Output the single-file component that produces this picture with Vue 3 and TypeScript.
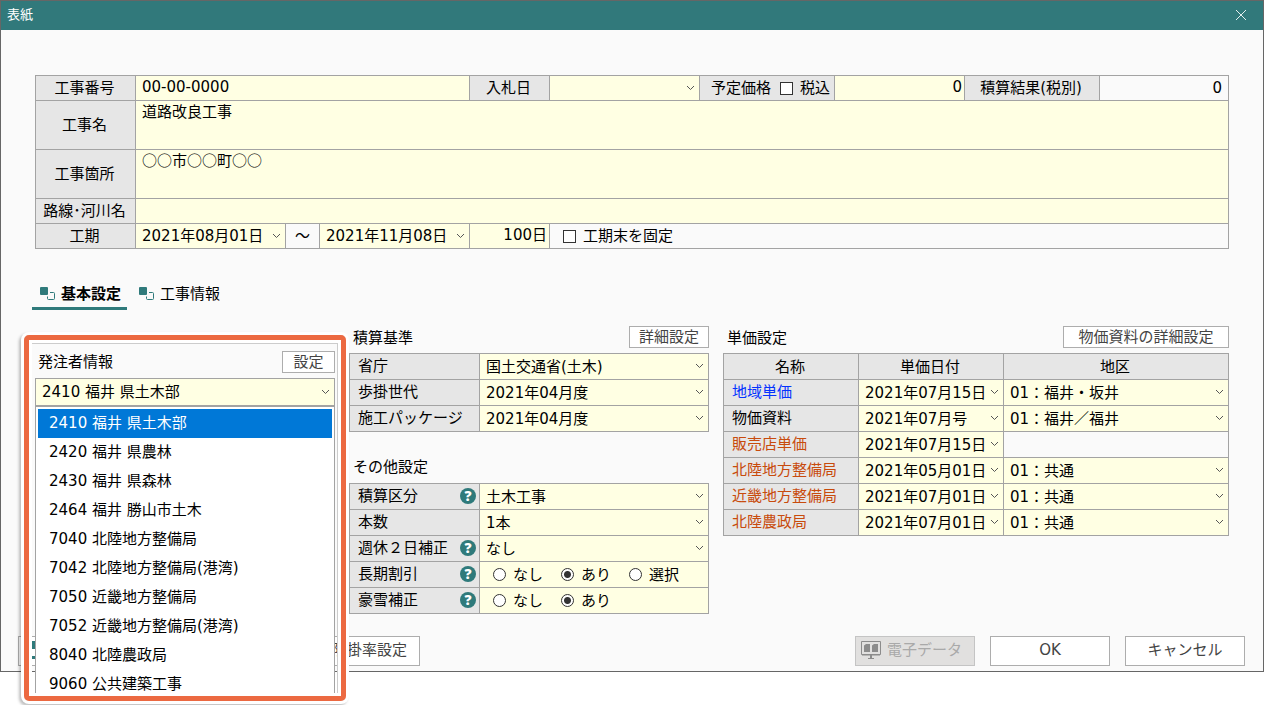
<script setup lang="ts">
import { ref } from 'vue'

interface PriceRow {
  name: string
  tone: 'blue' | 'black' | 'orange'
  date: string
  area: string | null
}

const clients: string[] = [
  '2410 福井 県土木部',
  '2420 福井 県農林',
  '2430 福井 県森林',
  '2464 福井 勝山市土木',
  '7040 北陸地方整備局',
  '7042 北陸地方整備局(港湾)',
  '7050 近畿地方整備局',
  '7052 近畿地方整備局(港湾)',
  '8040 北陸農政局',
  '9060 公共建築工事',
]
const client = ref(clients[0])

const standards = [
  { id: 'ministry', label: '省庁', value: '国土交通省(土木)' },
  { id: 'rate', label: '歩掛世代', value: '2021年04月度' },
  { id: 'package', label: '施工パッケージ', value: '2021年04月度' },
]

const others = [
  { id: 'division', label: '積算区分', value: '土木工事', help: true },
  { id: 'count', label: '本数', value: '1本', help: false },
  { id: 'holiday', label: '週休２日補正', value: 'なし', help: true },
]

const choices = ref([
  { id: 'long', label: '長期割引', options: ['なし', 'あり', '選択'], value: 'あり' },
  { id: 'snow', label: '豪雪補正', options: ['なし', 'あり'], value: 'あり' },
])

const prices: PriceRow[] = [
  { name: '地域単価', tone: 'blue', date: '2021年07月15日', area: '01：福井・坂井' },
  { name: '物価資料', tone: 'black', date: '2021年07月号', area: '01：福井／福井' },
  { name: '販売店単価', tone: 'orange', date: '2021年07月15日', area: null },
  { name: '北陸地方整備局', tone: 'orange', date: '2021年05月01日', area: '01：共通' },
  { name: '近畿地方整備局', tone: 'orange', date: '2021年07月01日', area: '01：共通' },
  { name: '北陸農政局', tone: 'orange', date: '2021年07月01日', area: '01：共通' },
]
</script>

<template>
  <div class="desktop">
    <main class="window">
      <header class="titlebar">
        <h1>表紙</h1>
        <button class="close" type="button" aria-label="閉じる">
          <svg width="12" height="12" viewBox="0 0 12 12"><path d="M1 1l10 10M11 1L1 11" /></svg>
        </button>
      </header>

      <section class="sheet">
        <div class="row">
          <label class="head" for="number">工事番号</label>
          <div class="cell fill"><input id="number" type="text" value="00-00-0000" /></div>
          <label class="cell tag w80" for="bid">入札日</label>
          <div class="cell w150 combo">
            <select id="bid"><option></option></select>
            <svg class="chev" viewBox="0 0 9 6"><path d="M1 1l3.5 3.5L8 1" /></svg>
          </div>
          <div class="cell tag w135">
            <label for="planned">予定価格</label>
            <label class="check"><input type="checkbox" />税込</label>
          </div>
          <div class="cell w130"><input id="planned" class="num" type="text" value="0" /></div>
          <div class="cell tag w135">積算結果(税別)</div>
          <output class="cell plain w129">0</output>
        </div>
        <div class="row tall">
          <label class="head" for="title">工事名</label>
          <div class="cell fill"><textarea id="title">道路改良工事</textarea></div>
        </div>
        <div class="row tall">
          <label class="head" for="place">工事箇所</label>
          <div class="cell fill"><textarea id="place">○○市○○町○○</textarea></div>
        </div>
        <div class="row">
          <label class="head" for="route">路線･河川名</label>
          <div class="cell fill"><input id="route" type="text" value="" /></div>
        </div>
        <div class="row">
          <label class="head" for="from">工期</label>
          <div class="cell w150 combo">
            <select id="from"><option>2021年08月01日</option></select>
            <svg class="chev" viewBox="0 0 9 6"><path d="M1 1l3.5 3.5L8 1" /></svg>
          </div>
          <div class="cell plain mid w34">～</div>
          <div class="cell w150 combo">
            <select id="to" aria-label="工期末"><option>2021年11月08日</option></select>
            <svg class="chev" viewBox="0 0 9 6"><path d="M1 1l3.5 3.5L8 1" /></svg>
          </div>
          <div class="cell w80"><input class="num" type="text" value="100日" aria-label="日数" /></div>
          <div class="cell plain fill">
            <label class="check"><input type="checkbox" />工期末を固定</label>
          </div>
        </div>
      </section>

      <nav class="tabs">
        <button v-for="(t, i) in ['基本設定', '工事情報']" :key="t" type="button" class="tab" :class="{ on: i === 0 }">
          <svg width="15" height="16" viewBox="0 0 15 16">
            <rect x="0" y="1" width="8" height="8" rx="1" fill="#2f7a7b" />
            <path
              d="M10 6.500h3.500a1 1 0 0 1 1 1v5a1 1 0 0 1-1 1h-5a1 1 0 0 1-1-1v-2"
              fill="none"
              stroke="#2f7a7b"
            />
          </svg>
          {{ t }}
        </button>
      </nav>

      <div class="columns">
        <section class="client">
          <div class="callout">
            <div class="panel">
              <div class="panel-top">
                <div class="bar">
                  <label for="client">発注者情報</label>
                  <button type="button" class="btn small w53">設定</button>
                </div>
                <div class="combo picker">
                  <select id="client" v-model="client">
                    <option v-for="c in clients" :key="c">{{ c }}</option>
                  </select>
                  <svg class="chev" viewBox="0 0 9 6"><path d="M1 1l3.5 3.5L8 1" /></svg>
                </div>
              </div>
              <div class="panel-body">
                <ul class="list" role="listbox" aria-label="発注者情報">
                  <li
                    v-for="c in clients"
                    :key="c"
                    role="option"
                    :aria-selected="c === client"
                    :class="{ on: c === client }"
                    @click="client = c"
                  >{{ c }}</li>
                </ul>
              </div>
            </div>
          </div>
        </section>

        <section class="middle">
          <div class="bar">
            <h2>積算基準</h2>
            <button type="button" class="btn small w80">詳細設定</button>
          </div>
          <div class="form">
            <div v-for="s in standards" :key="s.id" class="line">
              <label class="name" :for="s.id">{{ s.label }}</label>
              <div class="value combo">
                <select :id="s.id"><option>{{ s.value }}</option></select>
                <svg class="chev" viewBox="0 0 9 6"><path d="M1 1l3.5 3.5L8 1" /></svg>
              </div>
            </div>
          </div>
          <div class="bar second"><h2>その他設定</h2></div>
          <div class="form">
            <div v-for="s in others" :key="s.id" class="line">
              <div class="name">
                <label :for="s.id">{{ s.label }}</label>
                <button v-if="s.help" type="button" class="help">?</button>
              </div>
              <div class="value combo">
                <select :id="s.id"><option>{{ s.value }}</option></select>
                <svg class="chev" viewBox="0 0 9 6"><path d="M1 1l3.5 3.5L8 1" /></svg>
              </div>
            </div>
            <div v-for="c in choices" :key="c.id" class="line" role="radiogroup" :aria-label="c.label">
              <div class="name">
                <span>{{ c.label }}</span>
                <button type="button" class="help">?</button>
              </div>
              <div class="value radios">
                <label v-for="o in c.options" :key="o">
                  <input v-model="c.value" type="radio" :name="c.id" :value="o" />{{ o }}
                </label>
              </div>
            </div>
          </div>
        </section>

        <section class="prices">
          <div class="bar">
            <h2>単価設定</h2>
            <button type="button" class="btn small w166">物価資料の詳細設定</button>
          </div>
          <table>
            <colgroup><col class="c-name" /><col class="c-date" /><col /></colgroup>
            <thead>
              <tr><th scope="col">名称</th><th scope="col">単価日付</th><th scope="col">地区</th></tr>
            </thead>
            <tbody>
              <tr v-for="p in prices" :key="p.name">
                <th scope="row" :class="p.tone">{{ p.name }}</th>
                <td>
                  <div class="combo">
                    <select :aria-label="p.name + ' 単価日付'"><option>{{ p.date }}</option></select>
                    <svg class="chev" viewBox="0 0 9 6"><path d="M1 1l3.5 3.5L8 1" /></svg>
                  </div>
                </td>
                <td :class="{ none: !p.area }">
                  <div v-if="p.area" class="combo">
                    <select :aria-label="p.name + ' 地区'"><option>{{ p.area }}</option></select>
                    <svg class="chev" viewBox="0 0 9 6"><path d="M1 1l3.5 3.5L8 1" /></svg>
                  </div>
                </td>
              </tr>
            </tbody>
          </table>
        </section>
      </div>

      <footer class="actions">
        <button type="button" class="btn big ratio">
          <svg width="16" height="20" viewBox="0 0 16 20">
            <path d="M0 1h14v8H0zM0 16h14v3H0z" fill="#2f7a7b" />
            <path d="M3 5h9" stroke="#fff" />
          </svg>
          <span>限掛率設定</span>
        </button>
        <span class="spacer"></span>
        <button type="button" class="btn big data w120" disabled>
          <svg width="20" height="18" viewBox="0 0 20 18">
            <path d="M.5.5h19v13H.5z" fill="none" stroke="#8c8c8c" />
            <path d="M1 13h18v1.500H1zM9 14h2v3H9zM7 17h6v1H7z" fill="#8c8c8c" />
            <path d="M3 4.500L5 3h4v8H3zM11 4.500L13 3h4v8h-6z" fill="#8c8c8c" />
          </svg>
          電子データ
        </button>
        <button type="button" class="btn big w120">OK</button>
        <button type="button" class="btn big w120">キャンセル</button>
      </footer>
    </main>
  </div>
</template>

<style>
body {
  margin: 0;
  background: #fff;
}
</style>

<style scoped>
* {
  box-sizing: border-box;
}
.desktop {
  min-height: 100vh;
}
.window {
  --line: #a3a3a3;
  --input: #ffffe3;
  --head: #e6e6e6;
  border: 1px solid #666;
  background: #fafafa;
  color: #000;
  font: 15px/22px 'DejaVu Sans', 'Noto Sans CJK JP', sans-serif;
}
button,
input,
select,
textarea {
  font: inherit;
  color: inherit;
  margin: 0;
}
h1,
h2 {
  margin: 0;
  font-size: 15px;
  font-weight: 400;
}
h2 {
  padding-top: 2px;
}
.titlebar {
  display: flex;
  align-items: center;
  justify-content: space-between;
  height: 29px;
  padding: 0 16px 1px 6px;
  background: #31797b;
  color: #fff;
}
.titlebar h1 {
  font-size: 13px;
}
.close {
  display: flex;
  padding: 0;
  border: 0;
  background: none;
}
.close path {
  stroke: #e4efef;
  fill: none;
}

.sheet {
  margin: 45px 34px 0;
  border: 1px solid var(--line);
}
.row {
  display: flex;
  height: 25px;
  border-bottom: 1px solid var(--line);
}
.row:last-child {
  height: 24px;
  border-bottom: 0;
}
.row.tall {
  height: 49px;
}
.head {
  display: flex;
  align-items: center;
  justify-content: center;
  flex: 0 0 99px;
  padding-right: 2px;
  background: var(--head);
  white-space: nowrap;
}
.cell {
  display: flex;
  border-left: 1px solid var(--line);
  background: var(--input);
}
.fill {
  flex: 1;
}
.w34 {
  flex: 0 0 34px;
}
.w80 {
  flex: 0 0 80px;
}
.w129 {
  flex: 0 0 129px;
}
.w130 {
  flex: 0 0 130px;
}
.w135 {
  flex: 0 0 135px;
}
.w150 {
  flex: 0 0 150px;
}
.w53 {
  width: 53px;
}
.btn.w80 {
  width: 80px;
}
.w120 {
  width: 120px;
}
.w166 {
  width: 166px;
}
.tag {
  align-items: center;
  justify-content: center;
  gap: 9px;
  padding-right: 2px;
  background: var(--head);
  white-space: nowrap;
}
.tag:has(.check) {
  justify-content: flex-end;
  padding-right: 4px;
}
.plain {
  align-items: center;
  background: #fafafa;
}
.plain.mid {
  justify-content: center;
}
output.plain {
  justify-content: flex-end;
  padding-right: 6px;
}
.cell > input,
.cell > textarea {
  flex: 1;
  width: 100%;
  min-width: 0;
  padding: 0 6px 3px;
  border: 0;
  outline: 0;
  background: transparent;
  resize: none;
}
.cell > input.num {
  padding: 0 2px 3px;
  text-align: right;
}
.cell > textarea {
  padding: 0 6px;
  font-family: 'Noto Sans CJK JP', sans-serif;
  line-height: 20px;
}
.check {
  display: flex;
  align-items: center;
  gap: 7px;
}
.plain .check {
  padding-left: 13px;
}
.check input {
  appearance: none;
  width: 13px;
  height: 13px;
  border: 1px solid #333;
  background: #fff;
}
.combo {
  display: grid;
  align-items: center;
  grid-template-columns: minmax(0, 1fr);
  background: var(--input);
}
.combo > * {
  grid-area: 1 / 1;
}
.combo select {
  appearance: none;
  width: 100%;
  height: 22px;
  padding: 0 0 2px 6px;
  border: 0;
  outline: 0;
  background: transparent;
}
.chev {
  justify-self: end;
  width: 9px;
  height: 6px;
  margin: 0 4px 1px 0;
  pointer-events: none;
}
.chev path {
  fill: none;
  stroke: #555;
}

.tabs {
  display: flex;
  margin: 34px 31px 0;
}
.tab {
  display: flex;
  align-items: center;
  gap: 6px;
  height: 27px;
  padding: 0 6px 3px 8px;
  border: 0;
  border-bottom: 3px solid transparent;
  background: none;
}
.tab + .tab {
  padding-left: 12px;
}
.tab.on {
  border-bottom-color: #2f7a7b;
  font-weight: 700;
}

.columns {
  display: grid;
  grid-template-columns: 300px 360px minmax(0, 1fr);
  gap: 14px;
  margin: 15px 34px 0;
}
.bar {
  display: flex;
  align-items: center;
  justify-content: space-between;
  height: 28px;
  padding: 0 0 5px 4px;
}
.btn {
  border: 1px solid #adadad;
  background: #fff;
  color: #444;
  padding: 0;
  white-space: nowrap;
}
.btn.small {
  height: 22px;
  line-height: 20px;
}
.btn.big {
  display: flex;
  align-items: center;
  justify-content: center;
  gap: 6px;
  height: 30px;
  padding-bottom: 2px;
}
.btn.data {
  justify-content: flex-start;
  padding-left: 5px;
}
.btn:disabled {
  border-color: #c4c4c4;
  background: #e1e0df;
  color: #a9a9a9;
}
.form {
  border: 1px solid var(--line);
}
.line {
  display: flex;
  height: 26px;
  border-bottom: 1px solid var(--line);
}
.line:last-child {
  height: 25px;
  border-bottom: 0;
}
.name {
  display: flex;
  align-items: center;
  justify-content: space-between;
  flex: 0 0 129px;
  padding: 0 3px 1px 8px;
  background: var(--head);
}
.value {
  flex: 1;
  border-left: 1px solid var(--line);
}
.bar.second {
  margin-top: 22px;
  height: 29px;
}
.help {
  width: 16px;
  height: 16px;
  padding: 0;
  border: 0;
  border-radius: 50%;
  background: #2f7a7b;
  color: #fff;
  font: 800 14px/16px 'Open Sans', sans-serif;
}
.radios {
  display: flex;
  align-items: center;
  padding-left: 13px;
  background: var(--input);
}
.radios label {
  display: flex;
  align-items: center;
  gap: 7px;
  width: 68px;
}
.radios input {
  appearance: none;
  width: 13px;
  height: 13px;
  border: 1px solid #333;
  border-radius: 50%;
  background: #fff;
}
.radios input:checked {
  background: radial-gradient(circle, #333 0 3px, #fff 4px);
}

table {
  width: 100%;
  table-layout: fixed;
  border-collapse: collapse;
}
.c-name {
  width: 135px;
}
.c-date {
  width: 145px;
}
th,
td {
  height: 26px;
  padding: 0;
  border: 1px solid var(--line);
  background: var(--input);
  line-height: 22px;
}
th {
  padding-right: 2px;
  background: var(--head);
  font-weight: 400;
}
tbody th {
  padding-bottom: 2px;
  padding-left: 8px;
  text-align: left;
}
th.blue {
  color: #0433ff;
}
th.orange {
  color: #c84b0c;
}
td.none {
  background: #fafafa;
}

.client {
  position: relative;
}
.callout {
  position: absolute;
  top: 10px;
  left: -11px;
  width: 322px;
  border: 5px solid #ec6941;
  border-radius: 5px;
  box-shadow: 0 0 0 3px #fff, -2px 2px 3px 3px rgba(0, 0, 0, 0.25);
}
.panel {
  height: 356px;
  overflow: hidden;
  border: 3px solid #fff;
}
.panel-top {
  padding: 7px 3px 0;
  border-top: 1px solid #ccc;
  border-right: 1px solid #ccc;
  background: #fafafa;
}
.panel-top .bar {
  height: 27px;
  padding: 0 0 5px 3px;
}
.panel-top .bar,
.picker {
  margin-right: -1px;
}
.picker {
  height: 28px;
  border: 1px solid var(--line);
}
.panel-body {
  padding: 0 2px 0 3px;
  border-right: 1px solid #ccc;
}
.list {
  margin: 0;
  padding: 2px;
  border: 1px solid var(--line);
  background: #fff;
  list-style: none;
}
.list li {
  height: 29px;
  padding-left: 11px;
  line-height: 28px;
}
.list li.on {
  background: #0078d7;
  color: #fff;
}

.actions {
  display: flex;
  gap: 15px;
  margin: 22px 18px 5px 17px;
}
.spacer {
  flex: 1;
}
.btn.ratio {
  justify-content: space-between;
  width: 402px;
  padding: 0 12px 2px 13px;
}
</style>
